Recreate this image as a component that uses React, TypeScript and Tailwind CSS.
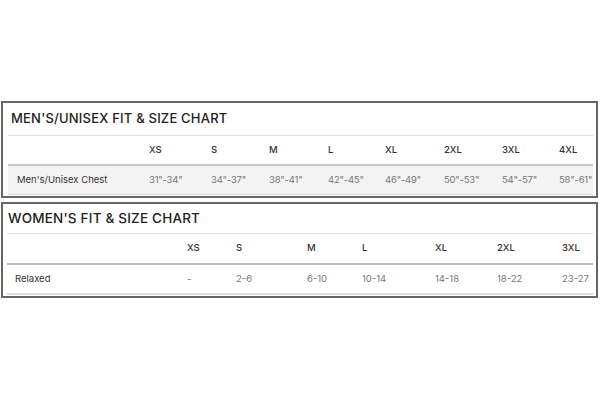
import React from 'react'

const menSizes = ['XS', 'S', 'M', 'L', 'XL', '2XL', '3XL', '4XL']
const menChest = ['31"-34"', '34"-37"', '38"-41"', '42"-45"', '46"-49"', '50"-53"', '54"-57"', '58"-61"']

const womenSizes = ['XS', 'S', 'M', 'L', 'XL', '2XL', '3XL']
const womenRelaxed = ['-', '2-6', '6-10', '10-14', '14-18', '18-22', '23-27']

const App = () => {
  return (
    <div className="w-[600px] h-[400px] bg-white pt-[101px] font-['Inter',sans-serif]">
      {/* men's chart */}
      <div className="ml-[1px] w-[597px] h-[97px] border-2 border-[#666]">
        <h2 className="pl-2 pt-[5px] h-[32px] text-[13px] leading-[20px] font-medium tracking-[0.2px] text-[#222]">
          MEN'S/UNISEX FIT &amp; SIZE CHART
        </h2>
        <div className="ml-[5px] mr-[3px] border-t border-[#ddd]">
          <div className="grid grid-cols-[141px_62px_58px_59px_57px_59px_58px_57px_1fr] h-[28px] items-center text-[9.5px] font-medium text-[#333]">
            <div></div>
            {menSizes.map(s => (
              <div key={s}>{s}</div>
            ))}
          </div>
          <div className="grid grid-cols-[141px_62px_58px_59px_57px_59px_58px_57px_1fr] h-[31px] items-center bg-[#f3f3f3] border-t-2 border-b border-t-[#c8c8c8] border-b-[#d5d5d5] text-[9.5px]">
            <div className="pl-[9px] text-[#333]">Men's/Unisex Chest</div>
            {menChest.map(c => (
              <div key={c} className="text-[#777] tracking-[-0.2px]">{c}</div>
            ))}
          </div>
        </div>
      </div>

      {/* women's chart */}
      <div className="mt-[4px] ml-[1px] w-[597px] h-[96px] border-2 border-[#666]">
        <h2 className="pl-[5px] pt-[4px] h-[29px] text-[13.5px] leading-[20px] font-medium tracking-[0.2px] text-[#222]">
          WOMEN'S FIT &amp; SIZE CHART
        </h2>
        <div className="ml-[4px] mr-[3px] border-t border-[#ddd]">
          <div className="grid grid-cols-[180px_49px_71px_55px_73px_62px_65px_1fr] h-[29px] items-center text-[9.5px] font-medium text-[#333]">
            <div></div>
            {womenSizes.map(s => (
              <div key={s}>{s}</div>
            ))}
          </div>
          <div className="grid grid-cols-[180px_49px_71px_55px_73px_62px_65px_1fr] h-[32px] items-center border-t-2 border-b-2 border-t-[#bbb] border-b-[#ddd] text-[9.5px]">
            <div className="pl-2 text-[#333]">Relaxed</div>
            {womenRelaxed.map(r => (
              <div key={r} className="text-[#777]">{r}</div>
            ))}
          </div>
        </div>
      </div>
    </div>
  )
}

export default App
